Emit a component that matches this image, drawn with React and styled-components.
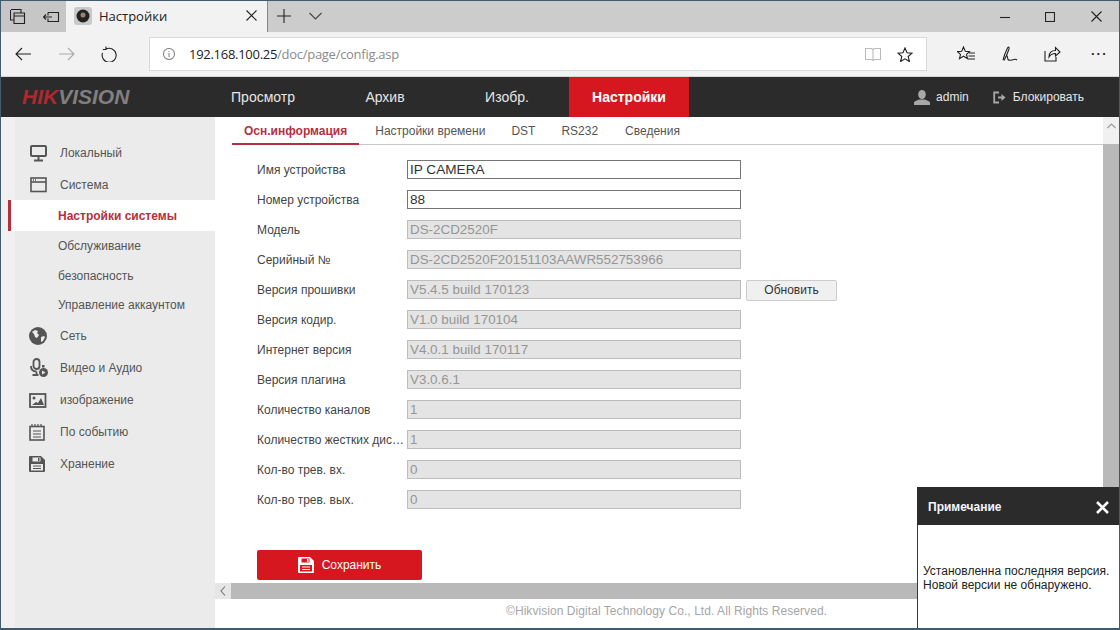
import React from "react";
import styled, { createGlobalStyle } from "styled-components";

const Global = createGlobalStyle`
  html, body { margin: 0; padding: 0; background: #fff; overflow: hidden; }
  * { box-sizing: border-box; }
`;

const Frame = styled.div`
  position: relative;
  width: 1120px;
  height: 630px;
  overflow: hidden;
  display: flex;
  flex-direction: column;
  border: 1px solid #3f5b6e;
  border-bottom-width: 2px;
  font-family: "Liberation Sans", Arial, sans-serif;
`;

const TitleBar = styled.div`
  height: 31px;
  flex: none;
  display: flex;
  align-items: stretch;
  background: #cccccc;
  color: #111;
`;

const TabTools = styled.div`
  width: 65px;
  display: flex;
  align-items: center;
  gap: 17px;
  padding-left: 9px;
  background: #c6c6c6;
`;

const Tab = styled.div`
  width: 201px;
  display: flex;
  align-items: center;
  padding: 0 10px 2px 8px;
  background: #f2f2f2;
  font: 13px "Open Sans", sans-serif;
  color: #222;
`;

const TabTitle = styled.span`
  flex: 1;
  margin-left: 7px;
`;

const TabNew = styled.div`
  display: flex;
  align-items: center;
  gap: 18px;
  padding: 0 0 2px 9px;
  border-left: 1px solid #888;
`;

const WindowButtons = styled.div`
  margin-left: auto;
  display: flex;
  align-items: center;
  gap: 35px;
  padding: 0 17px 0 0;
  & > svg:last-child { margin-left: 1px; }
`;

const AddressBar = styled.div`
  height: 45px;
  flex: none;
  display: flex;
  align-items: center;
  background: #f2f2f2;
  border-bottom: 1px solid #d5d5d5;
`;

const NavButtons = styled.div`
  width: 148px;
  display: flex;
  align-items: center;
  gap: 26px;
  padding-left: 14px;
`;

const UrlBox = styled.div`
  width: 778px;
  height: 34px;
  display: flex;
  align-items: center;
  padding: 0 13px;
  background: #fff;
  border: 1px solid #d9d9d9;
  font: 13px "Open Sans", sans-serif;
`;

const UrlText = styled.span`
  flex: 1;
  margin-left: 14px;
  color: #222;
  letter-spacing: -0.28px;
  & > span { color: #8a8a8a; }
`;

const UrlIcons = styled.div`
  display: flex;
  align-items: center;
  gap: 16px;
`;

const BrowserTools = styled.div`
  flex: 1;
  display: flex;
  align-items: center;
  gap: 26px;
  padding-left: 30px;
`;

const Dots = styled.span`
  margin-left: 4px;
  font-size: 13px;
  font-weight: 700;
  letter-spacing: 2px;
  color: #222;
  line-height: 8px;
  padding-bottom: 6px;
`;

const Header = styled.header`
  height: 40px;
  flex: none;
  display: flex;
  align-items: center;
  background: #2b2b2b;
`;

const Logo = styled.div`
  width: 202px;
  padding-left: 21px;
  font: italic 700 21px "Liberation Sans", sans-serif;
  color: #808080;
  & > span { color: #b0282f; }
`;

const MainNav = styled.nav`
  display: flex;
  gap: 2px;
  height: 100%;
`;

const NavItem = styled.div`
  width: 120px;
  display: flex;
  align-items: center;
  justify-content: center;
  font-size: 14px;
  color: ${(p) => (p.$active ? "#fff" : "#e6e6e6")};
  font-weight: ${(p) => (p.$active ? 700 : 400)};
  background: ${(p) => (p.$active ? "#d7171f" : "transparent")};
`;

const UserArea = styled.div`
  margin-left: auto;
  display: flex;
  align-items: center;
  padding-right: 35px;
  font-size: 12px;
  color: #e6e6e6;
`;

const UserLink = styled.span`
  display: flex;
  align-items: center;
  gap: ${(p) => p.$iconGap || 6}px;
  margin-left: ${(p) => p.$gap || 0}px;
`;

const Body = styled.div`
  flex: 1;
  min-height: 0;
  display: flex;
`;

const Sidebar = styled.aside`
  width: 214px;
  flex: none;
  padding: 19px 0 0 7px;
  background: linear-gradient(to right, #f0f0f0 0, #f0f0f0 14px, #ebebeb 14px);
`;

const MenuItem = styled.div`
  height: 32px;
  display: flex;
  align-items: center;
  padding: 2px 0 0 21px;
  font-size: 12px;
  color: #555;
`;

const IconSlot = styled.span`
  width: 31px;
  flex: none;
  display: flex;
  align-items: center;
`;

const SubItem = styled.div`
  height: ${(p) => p.$h || 30}px;
  display: flex;
  align-items: center;
  padding-left: ${(p) => (p.$active ? 47 : 50)}px;
  padding-bottom: ${(p) => p.$pb || 0}px;
  font-size: 12px;
  font-weight: ${(p) => (p.$active ? 700 : 400)};
  color: ${(p) => (p.$active ? "#b5303f" : "#555")};
  background: ${(p) => (p.$active ? "#fff" : "transparent")};
  border-left: ${(p) => (p.$active ? "3px solid #b5303f" : "none")};
`;

const Content = styled.main`
  flex: 1;
  min-width: 0;
  display: flex;
  flex-direction: column;
`;

const ContentRow = styled.div`
  flex: 1;
  min-height: 0;
  display: flex;
`;

const Page = styled.div`
  flex: 1;
  min-width: 0;
  padding-left: 17px;
`;

const Tabs = styled.div`
  height: 28px;
  display: flex;
  align-items: stretch;
  border-bottom: 1px solid #c8c8c8;
  font-size: 12px;
`;

const PageTab = styled.div`
  display: flex;
  align-items: center;
  padding: 1px ${(p) => p.$pad || 13}px ${(p) => (p.$active ? 0 : 1)}px;
  margin-left: ${(p) => p.$ml || 0}px;
  height: 28px;
  color: ${(p) => (p.$active ? "#b5303f" : "#555")};
  font-weight: ${(p) => (p.$active ? 700 : 400)};
  border-bottom: ${(p) => (p.$active ? "2px solid #b5303f" : "none")};
`;

const Form = styled.div`
  padding: 10px 0 0 25px;
`;

const Row = styled.div`
  height: 30px;
  display: flex;
  align-items: center;
`;

const Label = styled.div`
  width: 150px;
  font-size: 12px;
  color: #444;
  white-space: nowrap;
`;

const Field = styled.div`
  width: 334px;
  height: 19px;
  margin-bottom: 2px;
  display: flex;
  align-items: center;
  padding-left: 2px;
  font-size: ${(p) => (p.$editable ? 13.6 : 13.4)}px;
  color: ${(p) => (p.$editable ? "#333" : "#959595")};
  background: ${(p) => (p.$editable ? "#fff" : "#e4e4e4")};
  border: 1px solid ${(p) => (p.$editable ? "#767676" : "#bdbdbd")};
`;

const UpdateButton = styled.div`
  width: 91px;
  height: 21px;
  margin-left: 5px;
  display: flex;
  align-items: center;
  justify-content: center;
  font-size: 12px;
  color: #333;
  background: #f0f0f0;
  border: 1px solid #ccc;
  border-radius: 2px;
`;

const SaveButton = styled.div`
  width: 165px;
  height: 30px;
  margin: 35px 0 0 25px;
  display: flex;
  align-items: center;
  justify-content: center;
  gap: 8px;
  font-size: 12px;
  color: #fff;
  background: #d7171f;
  border-radius: 2px;
`;

const VScroll = styled.div`
  width: 16px;
  flex: none;
  display: flex;
  flex-direction: column;
  background: #f0f0f0;
`;

const VArrow = styled.div`
  height: 27px;
  display: flex;
  justify-content: center;
  padding-top: 6px;
`;

const VThumb = styled.div`
  flex: 1;
  background: #b9b9b9;
`;

const HScroll = styled.div`
  height: 16px;
  flex: none;
  display: flex;
  background: #b9b9b9;
`;

const HArrow = styled.div`
  width: 16px;
  display: flex;
  align-items: center;
  justify-content: center;
  background: #e6e6e6;
`;

const Footer = styled.footer`
  height: 29px;
  flex: none;
  padding-left: 291px;
  padding-top: 5px;
  font-size: 12px;
  letter-spacing: 0.06px;
  color: #a6a6a6;
`;

const Notice = styled.div`
  position: absolute;
  right: -1px;
  bottom: -1px;
  width: 203px;
  height: 142px;
  display: flex;
  flex-direction: column;
  background: #fff;
  border: 1px solid #3a3a3a;
  border-top: none;
`;

const NoticeHead = styled.div`
  height: 38px;
  flex: none;
  margin: 0 -1px;
  display: flex;
  align-items: center;
  justify-content: space-between;
  padding: 2px 11px 0;
  background: #2b2b2b;
  color: #f2f6ff;
  font-size: 12px;
  font-weight: 700;
`;

const NoticeText = styled.div`
  padding: 39px 0 0 5px;
  font-size: 12px;
  line-height: 14px;
  letter-spacing: 0.02px;
  color: #222;
`;

const Ico = ({ w = 16, h = 16, color = "#222", sw = 1.1, children }) => (
  <svg width={w} height={h} viewBox={`0 0 ${w} ${h}`} fill="none" stroke={color} strokeWidth={sw}>
    {children}
  </svg>
);

const MonitorIcon = () => (
  <Ico w={18} h={17} color="#555" sw={2}>
    <rect x="2" y="1" width="15" height="10" rx="1" />
    <path d="M9.500 12v3M5 15.500h9" />
  </Ico>
);
const WindowIcon = () => (
  <Ico w={18} h={16} color="#555" sw={1.6}>
    <rect x="2" y="1" width="15" height="13.500" />
    <path d="M2 5h15" />
    <path d="M4 3h3" strokeDasharray="1 1" />
  </Ico>
);
const GlobeIcon = () => (
  <svg width="18" height="18" viewBox="0 0 18 18">
    <circle cx="9" cy="9" r="9" fill="#555" />
    <path d="M3 5l3-2 3 1-1 2 2 2-2 3-2-1-1-3zM12 10l3-1 1 1-2 4-2 1z" fill="#ebebeb" />
  </svg>
);
const MicIcon = () => (
  <svg width="20" height="20" viewBox="0 0 20 20" fill="none">
    <rect x="4.500" y="1" width="6" height="10" rx="3" stroke="#555" strokeWidth="1.800" />
    <path d="M2 8c0 4 2.500 5.500 5.500 5.500M7.500 13.500v2.500M3.500 17h6" stroke="#555" strokeWidth="1.800" />
    <circle cx="14.500" cy="14.500" r="4.500" fill="#555" />
    <path d="M13 12.500l3.500 2-3.500 2z" fill="#ebebeb" />
    <rect x="13" y="7" width="2.500" height="2.500" fill="#555" />
  </svg>
);
const ImageIcon = () => (
  <svg width="18" height="15" viewBox="0 0 18 15" fill="none">
    <rect x="1" y="1" width="15.500" height="13" stroke="#555" strokeWidth="1.800" />
    <circle cx="5" cy="5" r="1.500" fill="#555" />
    <path d="M3 12l4-3 2 1 3-5 3 7z" fill="#555" />
  </svg>
);
const NotesIcon = () => (
  <svg width="17" height="17" viewBox="0 0 17 17" fill="none">
    <rect x="1" y="2.500" width="14" height="13.500" stroke="#555" strokeWidth="1.600" />
    <path d="M3 0v3M6 0v3M9 0v3M12 0v3" stroke="#555" strokeWidth="1.200" />
    <path d="M4 7h8M4 10h8M4 13h8" stroke="#555" strokeWidth="1.200" />
  </svg>
);
const FloppyIcon = ({ color = "#555", bg = "#ebebeb" }) => (
  <svg width="16" height="16" viewBox="0 0 16 16">
    <path d="M0 1a1 1 0 0 1 1-1h11l4 4v11a1 1 0 0 1-1 1H1a1 1 0 0 1-1-1z" fill={color} />
    <rect x="3.500" y="1.500" width="8" height="4" fill={bg} />
    <rect x="9" y="2" width="1.500" height="3" fill={color} />
    <rect x="2" y="8" width="12" height="6.500" fill={bg} />
    <path d="M4 10h8M4 12.500h8" stroke={color} strokeWidth="1" />
  </svg>
);
const UserIcon = () => (
  <svg width="16" height="15" viewBox="0 0 16 15" fill="#a8a8a8">
    <ellipse cx="8" cy="4.500" rx="3.800" ry="4.500" />
    <path d="M0 15v-2c0-2 3-2.500 5.500-3.500h5C13 10.500 16 11 16 13v2z" />
  </svg>
);
const LockIcon = () => (
  <svg width="13" height="13" viewBox="0 0 13 13" fill="none">
    <path d="M6 1.500H1.200v10H6" stroke="#a8a8a8" strokeWidth="1.800" />
    <path d="M5 5.500h3.500V3l4 3.500-4 3.500V7.500H5z" fill="#a8a8a8" />
  </svg>
);

const menuTop = [
  { label: "Локальный", icon: <MonitorIcon /> },
  { label: "Система", icon: <WindowIcon /> },
];
const subMenu = [
  { label: "Настройки системы", active: true, h: 31 },
  { label: "Обслуживание", h: 29 },
  { label: "безопасность", h: 31 },
  { label: "Управление аккаунтом", h: 28, pb: 1 },
];
const menuBottom = [
  { label: "Сеть", icon: <GlobeIcon /> },
  { label: "Видео и Аудио", icon: <MicIcon /> },
  { label: "изображение", icon: <ImageIcon /> },
  { label: "По событию", icon: <NotesIcon /> },
  { label: "Хранение", icon: <FloppyIcon /> },
];
const fields = [
  ["Имя устройства", "IP CAMERA", true],
  ["Номер устройства", "88", true],
  ["Модель", "DS-2CD2520F"],
  ["Серийный №", "DS-2CD2520F20151103AAWR552753966"],
  ["Версия прошивки", "V5.4.5 build 170123"],
  ["Версия кодир.", "V1.0 build 170104"],
  ["Интернет версия", "V4.0.1 build 170117"],
  ["Версия плагина", "V3.0.6.1"],
  ["Количество каналов", "1"],
  ["Количество жестких дис…", "1"],
  ["Кол-во трев. вх.", "0"],
  ["Кол-во трев. вых.", "0"],
];

export default function App() {
  return (
    <Frame>
      <Global />
      <TitleBar>
        <TabTools>
          <Ico w={16} h={16}>
            <path d="M1 .5h10v3M.5 1v10h3M4 4h10.500v10.500H4zM4 7h10.500" />
          </Ico>
          <Ico w={17} h={14}>
            <path d="M5 2.500h10.500v9H5v-3M5 5.500V2.500M.5 7H9M3 4.500L.5 7 3 9.500" />
          </Ico>
        </TabTools>
        <Tab>
          <svg width="18" height="18" viewBox="0 0 18 18">
            <rect width="18" height="18" rx="3" fill="#c9c9c9" />
            <circle cx="9" cy="9" r="6.500" fill="#222" />
            <circle cx="9" cy="8" r="2.500" fill="#a08070" />
          </svg>
          <TabTitle>Настройки</TabTitle>
          <Ico w={11} h={11}>
            <path d="M.5.5l10 10M10.500.5l-10 10" />
          </Ico>
        </Tab>
        <TabNew>
          <Ico w={14} h={14}>
            <path d="M7 0v14M0 7h14" />
          </Ico>
          <Ico w={13} h={8} color="#444">
            <path d="M.5 1l6 6 6-6" />
          </Ico>
        </TabNew>
        <WindowButtons>
          <Ico w={10} h={10}>
            <path d="M0 5.500h10" />
          </Ico>
          <Ico w={10} h={10}>
            <rect x=".5" y=".5" width="9" height="9" />
          </Ico>
          <Ico w={11} h={11}>
            <path d="M.5.5l10 10M10.500.5l-10 10" />
          </Ico>
        </WindowButtons>
      </TitleBar>
      <AddressBar>
        <NavButtons>
          <Ico w={17} h={14}>
            <path d="M16 7H1M7 1L1 7l6 6" />
          </Ico>
          <Ico w={17} h={14} color="#aaa">
            <path d="M1 7h15M10 1l6 6-6 6" />
          </Ico>
          <Ico w={16} h={16}>
            <path d="M5 3a7 7 0 1 1-3.500 4M5 .5V3.500H1.800" />
          </Ico>
        </NavButtons>
        <UrlBox>
          <Ico w={12} h={12} color="#888">
            <circle cx="6" cy="6" r="5.500" />
            <path d="M6 5v4M6 3v1" />
          </Ico>
          <UrlText>
            192.168.100.25<span>/doc/page/config.asp</span>
          </UrlText>
          <UrlIcons>
            <Ico w={16} h={14} color="#bbb">
              <path d="M.5 1.500h6L8 2.500l1.500-1h6v11h-6L8 13.500l-1.500-1h-6zM8 2.500v11" />
            </Ico>
            <Ico w={16} h={15}>
              <path d="M8 1l2 4.800 5 .4-3.800 3.300 1.200 5L8 11.800l-4.400 2.700 1.200-5L1 6.200l5-.4z" />
            </Ico>
          </UrlIcons>
        </UrlBox>
        <BrowserTools>
          <Ico w={18} h={16}>
            <path d="M6.500 1l1.800 4.300 4.200.3-3 2.800 1 4.300-4-2.500L2.500 12.700l1-4.300-3-2.800 4.200-.3zM12 7h6M11.500 10h6.500M11 13h7" />
          </Ico>
          <Ico w={17} h={16}>
            <path d="M2 14C3 10 5 5 6.500 2 7.500.5 8.500 1 8 3 7 6 5 11 3 14.500M5.500 9c1 1 1 3 1.500 4.500 1 1 3 1 6 0 1-.3 2-.5 3 .5" />
          </Ico>
          <Ico w={17} h={16}>
            <path d="M1 5v10h11v-4M5 11c0-5 3-6.500 6.500-6.500V1.500L16 6l-4.500 4V7.500C9 7.500 6.500 8.500 5 11z" />
          </Ico>
          <Dots>...</Dots>
        </BrowserTools>
      </AddressBar>
      <Header>
        <Logo>
          <span>HIK</span>VISION
        </Logo>
        <MainNav>
          <NavItem>Просмотр</NavItem>
          <NavItem>Архив</NavItem>
          <NavItem>Изобр.</NavItem>
          <NavItem $active>Настройки</NavItem>
        </MainNav>
        <UserArea>
          <UserLink>
            <UserIcon />
            admin
          </UserLink>
          <UserLink $gap={24} $iconGap={7}>
            <LockIcon />
            Блокировать
          </UserLink>
        </UserArea>
      </Header>
      <Body>
        <Sidebar>
          {menuTop.map((m) => (
            <MenuItem key={m.label}>
              <IconSlot>{m.icon}</IconSlot>
              {m.label}
            </MenuItem>
          ))}
          {subMenu.map((s) => (
            <SubItem key={s.label} $active={s.active} $h={s.h} $pb={s.pb}>
              {s.label}
            </SubItem>
          ))}
          {menuBottom.map((m) => (
            <MenuItem key={m.label}>
              <IconSlot>{m.icon}</IconSlot>
              {m.label}
            </MenuItem>
          ))}
        </Sidebar>
        <Content>
          <ContentRow>
            <Page>
              <Tabs>
                <PageTab $active $pad={12}>Осн.информация</PageTab>
                <PageTab $pad={14} $ml={2}>Настройки времени</PageTab>
                <PageTab $ml={-1}>DST</PageTab>
                <PageTab>RS232</PageTab>
                <PageTab $ml={1}>Сведения</PageTab>
              </Tabs>
              <Form>
                {fields.map(([label, value, editable], i) => (
                  <Row key={label}>
                    <Label>{label}</Label>
                    <Field $editable={editable}>{value}</Field>
                    {i === 4 && <UpdateButton>Обновить</UpdateButton>}
                  </Row>
                ))}
              </Form>
              <SaveButton>
                <FloppyIcon color="#fff" bg="#d7171f" />
                Сохранить
              </SaveButton>
            </Page>
            <VScroll>
              <VArrow>
                <Ico w={9} h={6} color="#999">
                  <path d="M.5 5L4.500 1l4 4" />
                </Ico>
              </VArrow>
              <VThumb />
            </VScroll>
          </ContentRow>
          <HScroll>
            <HArrow>
              <Ico w={6} h={10} color="#777">
                <path d="M5 .5L1 5l4 4.500" />
              </Ico>
            </HArrow>
          </HScroll>
          <Footer>©Hikvision Digital Technology Co., Ltd. All Rights Reserved.</Footer>
        </Content>
      </Body>
      <Notice>
        <NoticeHead>
          Примечание
          <Ico w={13} h={13} color="#fff" sw={2.600}>
            <path d="M1 1l11 11M12 1L1 12" />
          </Ico>
        </NoticeHead>
        <NoticeText>
          Установленна последняя версия.
          <br />
          Новой версии не обнаружено.
        </NoticeText>
      </Notice>
    </Frame>
  );
}
